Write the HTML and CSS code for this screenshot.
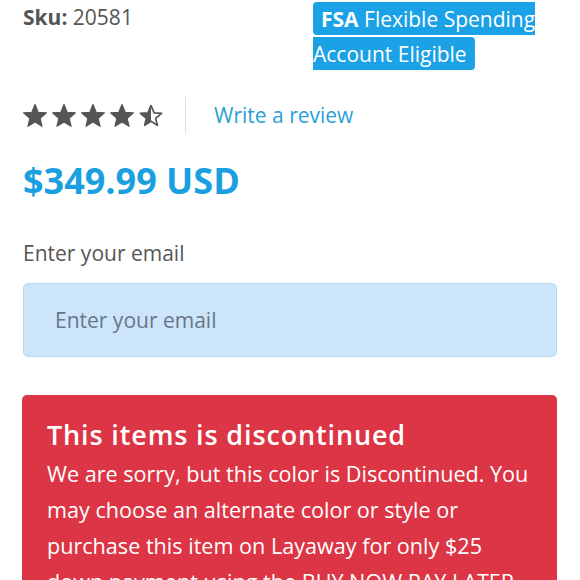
FILE: index.html
```html
<!DOCTYPE html>
<html>
<head>
<meta charset="utf-8">
<link rel="stylesheet" href="styles.css">
</head>
<body>
<div class="page">
  <div class="top">
    <div class="sku"><b>Sku:</b> 20581</div>
    <div class="fsa-col"><span class="fsa"><b>FSA</b> Flexible Spending Account Eligible</span></div>
  </div>

  <div class="rating">
    <div class="stars">
      <svg class="star" viewBox="0 0 24 23"><polygon points="12,0.6 15.17,8.23 23.41,8.89 17.14,14.27 19.05,22.31 12,18 4.95,22.31 6.86,14.27 0.59,8.89 8.83,8.23"/></svg>
      <svg class="star" viewBox="0 0 24 23"><polygon points="12,0.6 15.17,8.23 23.41,8.89 17.14,14.27 19.05,22.31 12,18 4.95,22.31 6.86,14.27 0.59,8.89 8.83,8.23"/></svg>
      <svg class="star" viewBox="0 0 24 23"><polygon points="12,0.6 15.17,8.23 23.41,8.89 17.14,14.27 19.05,22.31 12,18 4.95,22.31 6.86,14.27 0.59,8.89 8.83,8.23"/></svg>
      <svg class="star" viewBox="0 0 24 23"><polygon points="12,0.6 15.17,8.23 23.41,8.89 17.14,14.27 19.05,22.31 12,18 4.95,22.31 6.86,14.27 0.59,8.89 8.83,8.23"/></svg>
      <svg class="star half" viewBox="0 0 24 23">
        <defs><linearGradient id="hg" x1="0" x2="1" y1="0" y2="0"><stop offset="0.5" stop-color="#555"/><stop offset="0.5" stop-color="#fff"/></linearGradient></defs>
        <polygon points="12,1.6 15.17,8.9 22.6,9.4 16.6,14.3 18.4,21.4 12,17.3 5.6,21.4 7.4,14.3 1.4,9.4 8.83,8.9"/>
      </svg>
    </div>
    <div class="divider"></div>
    <a class="review" href="#">Write a review</a>
  </div>

  <div class="price">$349.99 USD</div>

  <label class="label" for="email">Enter your email</label>
  <div class="input" id="email">Enter your email</div>

  <div class="alert">
    <div class="alert-title">This items is discontinued</div>
    <p class="alert-body">We are sorry, but this color is Discontinued. You may choose an alternate color or style or purchase this item on Layaway for only $25 down payment using the BUY NOW PAY LATER option.</p>
  </div>
</div>
</body>
</html>
```
FILE: styles.css
```css
html, body {
  margin: 0;
  padding: 0;
  background: #fff;
}
.page {
  padding: 0 23px;
  font-family: "Open Sans", "Noto Sans", sans-serif;
  font-size: 21px;
  color: #555;
}
.top {
  display: grid;
  grid-template-columns: 267px 1fr;
  column-gap: 23px;
  line-height: 35px;
}
.sku b {
  font-weight: 700;
}
.fsa-col {
  padding-top: 2px;
}
.fsa {
  background: #1ba1e6;
  color: #fff;
  padding: 3px 8px 2px;
  border-radius: 4px;
  -webkit-box-decoration-break: slice;
  box-decoration-break: slice;
}
.fsa b { font-weight: 700; }

.rating {
  display: flex;
  align-items: center;
  margin-top: 25px;
  height: 36px;
}
.stars {
  display: flex;
  gap: 5px;
}
.star {
  width: 24px;
  height: 23px;
  display: block;
}
.star polygon {
  fill: #555;
  stroke: #555;
  stroke-width: 1.2;
  stroke-linejoin: round;
}
.star.half polygon {
  fill: url(#hg);
  stroke-width: 1.7;
}
.divider {
  width: 1px;
  height: 36px;
  background: #ddd;
  margin: 0 28px 0 22px;
}
.review {
  color: #2a9fd6;
  text-decoration: none;
  font-size: 21px;
}
.price {
  margin-top: 25px;
  font-size: 36px;
  font-weight: 700;
  color: #1a9fe0;
  line-height: 46px;
}
.label {
  display: block;
  margin-top: 34px;
  line-height: 30px;
}
.input {
  margin-top: 15px;
  height: 74px;
  box-sizing: border-box;
  background: #cce5fb;
  border: 1px solid #b9d9f3;
  border-radius: 5px;
  padding: 0 31px;
  display: flex;
  align-items: center;
  color: #667788;
}
.alert {
  margin: 38px 0 0 -1px;
  background: #dc3545;
  border-radius: 5px;
  padding: 23px 26px 23px 25px;
  color: #fff;
}
.alert-title {
  font-size: 27px;
  font-weight: 600;
  letter-spacing: 0.85px;
  line-height: 34px;
}
.alert-body {
  margin: 4px 0 0;
  font-size: 21.6px;
  line-height: 36px;
}
```
